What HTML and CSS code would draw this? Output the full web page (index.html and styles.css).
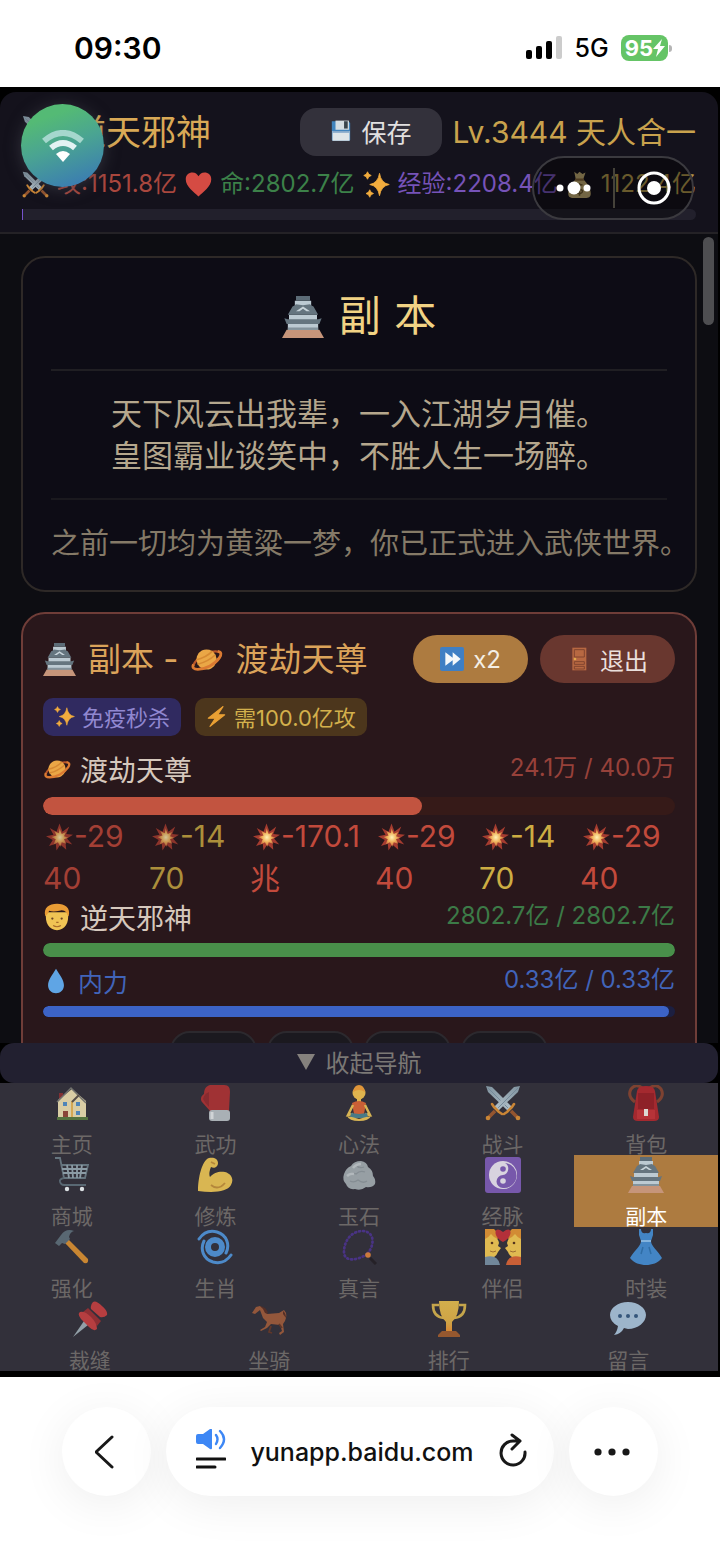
FILE: index.html
```html
<!DOCTYPE html>
<html lang="zh-CN">
<head>
<meta charset="utf-8">
<meta name="viewport" content="width=device-width, initial-scale=1">
<title>副本</title>
<link rel="stylesheet" href="styles.css">
</head>
<body>
<svg class="sprite" aria-hidden="true">
  <defs>
    <linearGradient id="steel" x1="0" y1="0" x2="1" y2="1"><stop offset="0" stop-color="#7f929e"/><stop offset="1" stop-color="#b3c2cb"/></linearGradient>
    <radialGradient id="flash"><stop offset="0" stop-color="#fff3b8"/><stop offset=".5" stop-color="#f0b35c"/><stop offset="1" stop-color="#c3643b"/></radialGradient>
    <linearGradient id="cup" x1="0" y1="0" x2="0" y2="1"><stop offset="0" stop-color="#d2ae4c"/><stop offset=".7" stop-color="#cfa446"/><stop offset="1" stop-color="#d98a35"/></linearGradient>
  </defs>
  <symbol id="sword" viewBox="0 0 36 36"><path d="M1 1l6 1 20 20-4 4L3 7z" fill="url(#steel)"/><path d="M3 3l20 20" stroke="#75899a" stroke-width="1"/><path d="M19 29l3-2 5-5 2-3" fill="none" stroke="#c98536" stroke-width="2.600" stroke-linecap="round" stroke-linejoin="round"/><path d="M26 26l6 6" stroke="#94552f" stroke-width="3.500"/><circle cx="33" cy="33" r="2.300" fill="#c98536"/></symbol>
  <symbol id="swords" viewBox="0 0 36 36"><use href="#sword" width="36" height="36"/><g transform="translate(36 0) scale(-1 1)"><use href="#sword" width="36" height="36"/></g></symbol>
  <symbol id="castle" viewBox="0 0 36 36"><path d="M4 29h28l4 7H0z" fill="#c6957a"/><path d="M5 24h26v5H5zM6 16h24v5H6zM11 4h14v5H11z" fill="#bccad2"/><path d="M5 27h26v2H5z" fill="#84939c"/><path d="M12 0h12v4H12z" fill="#5c6c77"/><path d="M9 9q2-1 3-2l6 1 6-1q1 1 3 2l4 7H5z" fill="#65757f"/><path d="M2 19l3 1h26l3-1-2 5H4z" fill="#65757f"/><path d="M12 13l6-4 6 4h-3l-3-2-3 2z" fill="#c8d4da"/></symbol>
  <symbol id="floppy" viewBox="0 0 36 36"><path d="M3 2h27l3 3v27q0 2-2 2H5q-2 0-2-2z" fill="#4184bd"/><path d="M9 1h22v15H9z" fill="#d5dde2"/><path d="M23 2h6v12h-6z" fill="#39434b"/><path d="M4 18h28v16H4z" fill="#dfe6e9"/><path d="M4 18h28v3H4z" fill="#87aacb"/></symbol>
  <symbol id="heart" viewBox="0 0 36 36"><path d="M18 34C12 28 1 21 1 11 1 5 5 2 10 2c4 0 6 2 8 5 2-3 4-5 8-5 5 0 9 3 9 9 0 10-11 17-17 23z" fill="#d54b43"/></symbol>
  <symbol id="spark" viewBox="0 0 36 36"><path d="M22 3q2 13 13 15-11 2-13 15Q20 20 9 18q11-2 13-15zM6 1q1 4 5 5-4 1-5 5-1-4-5-5 4-1 5-5zM9 25q1 4 5 5-4 1-5 5-1-4-5-5 4-1 5-5z" fill="#f2ac3e" stroke="#f2ac3e"/></symbol>
  <symbol id="bag" viewBox="0 0 36 36"><path d="M11 1l4 3 3-3 4 3 4-2-3 9c5 5 10 12 10 19 0 5-3 6-7 6H10c-5 0-7-2-7-6 0-7 5-14 10-19z" fill="#c0aa72"/><path d="M12 10h12v3H12z" fill="#80633a"/><path d="M22 19c-3-2-8-1-8 2 0 4 8 2 8 6 0 3-5 4-8 2M18 16v17" fill="none" stroke="#6b5830" stroke-width="2"/></symbol>
  <symbol id="planet" viewBox="0 0 36 36"><g transform="rotate(-28 18 18)"><path d="M2 17q6-5 16-5t16 5" fill="none" stroke="#b9562a" stroke-width="2.500"/><circle cx="18" cy="18" r="11" fill="#eaa746"/><path d="M8 13q10 3 20 0M7 18q11 3 22 0" fill="none" stroke="#d68a33" stroke-width="1.800"/><path d="M3 16c-7 5 6 10 15 10s22-5 15-10" fill="none" stroke="#db7a32" stroke-width="3"/></g></symbol>
  <symbol id="fast" viewBox="0 0 36 36"><rect width="36" height="36" rx="3" fill="#3f7fc4"/><path d="M8 8l11 8V8l12 10-12 10v-8L8 28z" fill="#f5f8fa"/></symbol>
  <symbol id="door" viewBox="0 0 36 36"><path d="M8 1h21v34H8z" fill="#b76842"/><path d="M11 4h15v11H11zM11 22h15v4H11zM11 29h15v4H11z" fill="none" stroke="#82452f" stroke-width="1.500"/><circle cx="12" cy="18" r="2" fill="#e0a84c"/></symbol>
  <symbol id="bolt" viewBox="0 0 36 36"><path d="M29 1L4 21h12L7 35l25-20H20z" fill="#e9a034" stroke="#e9a034" stroke-width="2" stroke-linejoin="round"/></symbol>
  <symbol id="boom" viewBox="0 0 36 36"><path d="M18 0l4 11 9-7-4 10 9 1-8 5 7 8-9-3 1 10-8-7-5 8-1-9-9 3 5-8-9-5 10-2-5-9 9 5z" fill="#a53c30"/><path d="M18 6l3 8 6-3-3 6 6 2-6 2 3 6-6-2-2 6-3-6-6 3 3-7-6-3 7-2-3-6 6 3z" fill="url(#flash)"/></symbol>
  <symbol id="face" viewBox="0 0 36 36"><path d="M4 12C2 26 8 35 18 35s16-9 14-23z" fill="#f0c454"/><path d="M3 17C0 6 8 1 18 1s18 5 15 16q-2-1-3-5-4-4-9-2-8 2-13 0-2 5-5 7z" fill="#e99c35"/><g fill="#6a4425"><circle cx="12" cy="20" r="1.500"/><circle cx="24" cy="20" r="1.500"/></g><path d="M17 25h3M13 29q5 3 10 0" fill="none" stroke="#a66a2a" stroke-width="1.500"/></symbol>
  <symbol id="drop" viewBox="0 0 36 36"><path d="M18 1c5 9 11 15 11 23 0 7-5 11-11 11S7 31 7 24C7 16 13 10 18 1z" fill="#5fa5e5"/></symbol>
  <symbol id="house" viewBox="0 0 36 36"><path d="M5 8h4v9H5z" fill="#813033"/><path d="M4 15L18 4l14 12v18H4z" fill="#d9cda4"/><path d="M3 17L17 3l15 15" fill="none" stroke="#71716d" stroke-width="1.500"/><path d="M18 16v18" stroke="#d4a853" stroke-width="2"/><path d="M18 17l7-7" stroke="#574e49" stroke-width="2"/><path d="M9 17h4v4H9zM22 17h4v4h-4zM22 26h4v4h-4z" fill="#4f85b8"/><path d="M9 26h5v8H9z" fill="#894538"/><path d="M3 32h31v3H3z" fill="#54733f"/></symbol>
  <symbol id="glove" viewBox="0 0 36 36"><path d="M13 0h14c5 0 6 3 6 7l-1 19H13L5 17c-2-3-1-6 2-8 0-5 2-8 6-9z" fill="#a03234"/><path d="M12 7q-5 2-6 7 2 4 6 8z" fill="#882b30"/><rect x="12" y="25" width="21" height="11" rx="3" fill="#a9b0b5"/><path d="M15 27v7" stroke="#d0d4d6" stroke-width="3"/></symbol>
  <symbol id="lotus" viewBox="0 0 36 36"><circle cx="18" cy="8" r="6.500" fill="#dfb44e"/><path d="M12 7q1-7 6-7t6 7q-6-4-12 0z" fill="#df9539"/><path d="M16 14h4v4h-4z" fill="#dfb44e"/><path d="M11 18q7-4 14 0l-2 11H13z" fill="#c95f36"/><path d="M12 20L7 30l5-1M24 20l5 10-5-1" fill="none" stroke="#d7b454" stroke-width="2.500"/><path d="M10 28l8 1 8-1 1 5H9z" fill="#477a86"/><path d="M6 31q6 1 12 3 6-2 12-3-2 5-12 5-10 0-12-5z" fill="#d7b454"/></symbol>
  <symbol id="pack" viewBox="0 0 36 36"><path d="M7 17Q-1 11 3 4 8-2 14 3M29 17q8-6 4-13-5-6-11-1" fill="none" stroke="#7e4231" stroke-width="3"/><path d="M9 6q1-5 9-5t9 5l4 26q0 4-5 4H10q-5 0-5-4z" fill="#a4292f"/><path d="M10 8h16v16H10z" fill="#8e2128"/><path d="M9 25h18v9H9z" fill="#b63338"/><path d="M16 24h4v7h-4z" fill="#dddad3"/></symbol>
  <symbol id="cart" viewBox="0 0 36 36"><path d="M1 1h5l4 20h21l3-13H8" fill="none" stroke="#66757f" stroke-width="1.800"/><path d="M8 12h25M9 16h23M13 8l2 13M18 8l1 13M23 8v13M28 8l-2 13" stroke="#8b9ba5" stroke-width="1.800"/><path d="M10 21q-5 1-4 4 1 3 4 3h22" fill="none" stroke="#596873" stroke-width="1.800"/><circle cx="13" cy="32" r="2.200" fill="#dce1e4"/><circle cx="28" cy="32" r="2.200" fill="#dce1e4"/></symbol>
  <symbol id="arm" viewBox="0 0 36 36"><path d="M1 34C1 21 5 3 12 1c4-1 9 0 9 5 0 4-4 6-7 4-2 5-2 8-1 10 4-5 10-6 15-5 7 2 9 8 6 13-4 7-17 8-33 6z" fill="#d9b652"/><path d="M14 28q7 6 14-2M14 5l4 2" fill="none" stroke="#b4873b" stroke-width="1.800"/></symbol>
  <symbol id="rock" viewBox="0 0 36 36"><path d="M3 17q2-6 7-8 3-5 10-5 6 1 7 6 5 3 5 9 3 3 2 8-3 4-9 3-5 4-11 2-7 1-9-5-4-4-2-10z" fill="#979fa4"/><path d="M7 18q4-3 8-1 4-4 9-2M15 8q3 4 8 2M9 24q4 2 8-1 5 4 9 1" fill="none" stroke="#858d93" stroke-width="1.300"/><path d="M12 11q3-4 8-4M6 19q3-3 7-2" fill="none" stroke="#b2b8bc" stroke-width="2.500"/></symbol>
  <symbol id="yin" viewBox="0 0 36 36"><rect width="36" height="36" rx="3" fill="#7758ab"/><circle cx="18" cy="18" r="14" fill="#d8d3df"/><path d="M20 6a12.500 12.500 0 0 1-2 25 6.500 6.500 0 0 1 0-13A6.500 6.500 0 0 0 20 6z" fill="#7758ab"/><circle cx="18" cy="12" r="2.800" fill="#7758ab"/><circle cx="18" cy="24" r="2.800" fill="#d8d3df"/></symbol>
  <symbol id="hammer" viewBox="0 0 36 36"><path d="M14 10l20 20q1 5-4 4L11 14z" fill="#c98632"/><path d="M1 14l6-8Q12-1 20 2q-4 1-5 6l1 2-5 5-3-1-3 3z" fill="#596873"/></symbol>
  <symbol id="cyclone" viewBox="0 0 36 36"><g fill="none" stroke="#4d8ac9" stroke-linecap="round"><circle cx="18" cy="18" r="7" stroke-width="6"/><path d="M2 10Q9 0 20 3c10 3 13 13 9 21M34 26q-7 10-18 7C6 30 3 20 7 12" stroke-width="3"/></g></symbol>
  <symbol id="beads" viewBox="0 0 36 36"><path d="M26 25C18 31 3 34 3 23 3 12 10 2 22 2c13 1 11 16 4 23z" fill="none" stroke="#493384" stroke-width="2.700" stroke-linecap="round" stroke-dasharray="1 3"/><circle cx="27" cy="26" r="2.800" fill="#cb7a3b"/><path d="M29 29l6 6" stroke="#252127" stroke-width="3"/></symbol>
  <symbol id="couple" viewBox="0 0 36 36"><path d="M0 5h8q5 4 6 9l-1 3 3 2-3 4q-3 8-13 6z" fill="#e0ba51"/><path d="M36 5h-8q-5 4-6 9l1 3-3 2 3 4q3 8 13 6z" fill="#e0ba51"/><path d="M0 0h9q4 3 4 10-5-2-7-5-3 4-6 5zM36 0h-9q-4 3-4 10 5-2 7-5 3 4 6 5z" fill="#d28b34"/><path d="M18 13C8 8 9-2 15 1l3 2 3-2c6-3 7 7-3 12z" fill="#b3303a"/><path d="M0 28q13-3 15 8H0z" fill="#71879a"/><path d="M36 28q-13-3-15 8h15z" fill="#c95f36"/><g fill="#54351e"><circle cx="7" cy="14" r="1.300"/><circle cx="29" cy="14" r="1.300"/></g><path d="M5 22q3 2 6 0M31 22q-3 2-6 0" fill="none" stroke="#9c6c34"/></symbol>
  <symbol id="dress" viewBox="0 0 36 36"><path d="M11 0h2q0 5 5 4 5 1 5-4h2v6l-2 6c0 5 7 10 11 17-4 5-10 7-16 7S6 34 2 29c4-7 11-12 11-17l-2-6z" fill="#4385c5"/><path d="M13 12h10" stroke="#83b3dd" stroke-width="2"/><path d="M15 18l-2 7M21 18l2 7" stroke="#2f6da6" stroke-width="1.500"/></symbol>
  <symbol id="pin" viewBox="0 0 36 36"><path d="M12 20l4 4L1 36z" fill="#929fa7"/><path d="M16 7l13 13-4 5L11 11z" fill="#8f2f34"/><path d="M21 1q3-2 9 4 6 5 5 9-3 3-7 2L19 8q-1-4 2-7zM8 11q5-1 11 5t6 12q-3 3-8-2l-8-8q-4-5-1-7z" fill="#b63e40"/></symbol>
  <symbol id="horse" viewBox="0 0 36 36"><path d="M1 12l4-6 4-1 4 3 3 5 12-1 5-3q4 4 1 11l-2 3 1 8-4 3-1-2 3-2-2-6-9-1-4 4-6 3-1-1 5-3 2-5-4-4-3-8-5 4z" fill="#93573b"/><path d="M9 5q7 1 8 8l-3-1q-1-4-5-7zM32 10q3 2 3 7l-3-4z" fill="#552f27"/><path d="M20 25l-2 6 3 1M28 23l3 4" fill="none" stroke="#613729" stroke-width="1.800"/></symbol>
  <symbol id="trophy" viewBox="0 0 36 36"><path d="M8 4H2q0 12 11 13h1M28 4h6q0 12-11 13h-1" fill="none" stroke="#c5a54b" stroke-width="2.600"/><path d="M8 0h20q0 15-7 21v9h-6v-9Q8 15 8 0z" fill="url(#cup)"/><path d="M11 30h14l4 4v2H7v-2z" fill="#96582f"/></symbol>
  <symbol id="chat" viewBox="0 0 36 36"><path d="M18 1c10 0 18 6 18 13s-8 14-18 14l-4-1q-3 6-10 7 3-3 4-9-8-4-8-11C0 7 8 1 18 1z" fill="#9db5cb"/><g fill="#35567b"><circle cx="10" cy="15" r="2"/><circle cx="18" cy="15" r="2"/><circle cx="26" cy="15" r="2"/></g></symbol>
</svg>

<header class="status">
  <time>09:30</time>
  <div class="status-right">
    <svg class="signal" viewBox="0 0 36 23" aria-label="信号"><rect x="0" y="14" width="6" height="9" rx="2"/><rect x="10" y="10" width="6" height="13" rx="2"/><rect x="20" y="5" width="6" height="18" rx="2"/><rect x="30" y="0" width="6" height="23" rx="2" fill="#ccc"/></svg>
    <span class="net">5G</span>
    <span class="battery"><b>95</b><svg viewBox="0 0 12 18" aria-hidden="true"><path d="M9 0L0 10h5l-2 8 9-11H7z" fill="#fff"/></svg></span>
  </div>
</header>

<div class="app">
  <section class="hero">
    <div class="hero-top">
      <h1 class="name"><svg><use href="#swords"/></svg>逆天邪神</h1>
      <button class="save"><svg><use href="#floppy"/></svg>保存</button>
      <span class="level">Lv.3444 天人合一</span>
    </div>
    <div class="stats">
      <span class="stat atk"><svg><use href="#swords"/></svg>攻:1151.8亿</span>
      <span class="stat hp"><svg><use href="#heart"/></svg>命:2802.7亿</span>
      <span class="stat exp"><svg><use href="#spark"/></svg>经验:2208.4亿</span>
      <span class="stat gold"><svg><use href="#bag"/></svg>1122.4亿</span>
    </div>
    <div class="exp-track"><div class="exp-fill"></div></div>
    <button class="float-wifi" aria-label="网络"><svg viewBox="0 0 42 32"><path d="M2 11Q21-5 40 11" fill="none" stroke="#a5d7cd" stroke-width="6"/><path d="M9 18q12-10 24 0" fill="none" stroke="#e2f2f3" stroke-width="6"/><path d="M14 24q7-6 14 0l-7 8z" fill="#fff"/></svg></button>
    <div class="capsule">
      <button aria-label="更多"><svg viewBox="0 0 36 14" fill="#fff"><circle cx="4" cy="7" r="3.500"/><circle cx="18" cy="7" r="6.500"/><circle cx="31" cy="7" r="3.500"/></svg></button>
      <button class="close" aria-label="关闭"><svg viewBox="0 0 34 34"><circle cx="17" cy="17" r="15" fill="none" stroke="#fff" stroke-width="3"/><circle cx="17" cy="17" r="7" fill="#fff"/></svg></button>
    </div>
  </section>

  <div class="viewport">
  <main class="scroll">
    <section class="card intro">
      <h2><svg><use href="#castle"/></svg>副 本</h2>
      <p class="poem">天下风云出我辈，一入江湖岁月催。<br>皇图霸业谈笑中，不胜人生一场醉。</p>
      <p class="note">之前一切均为黄粱一梦，你已正式进入武侠世界。</p>
    </section>

    <section class="card battle">
      <div class="battle-head">
        <h3><svg><use href="#castle"/></svg>副本 - <svg><use href="#planet"/></svg>渡劫天尊</h3>
        <button class="pill speed"><svg><use href="#fast"/></svg>x2</button>
        <button class="pill quit"><svg><use href="#door"/></svg>退出</button>
      </div>
      <div class="tags">
        <span class="tag immune"><svg><use href="#spark"/></svg>免疫秒杀</span>
        <span class="tag need"><svg><use href="#bolt"/></svg>需100.0亿攻</span>
      </div>
      <div class="unit"><span class="who"><svg><use href="#planet"/></svg>渡劫天尊</span><span class="val red">24.1万 / 40.0万</span></div>
      <div class="bar boss"><div class="fill" style="width:60%"></div></div>
      <div class="hits">
        <span class="hit faded"><svg><use href="#boom"/></svg>-29<br>40</span>
        <span class="hit yellow faded"><svg><use href="#boom"/></svg>-14<br>70</span>
        <span class="hit"><svg><use href="#boom"/></svg>-170.1<br>兆</span>
        <span class="hit"><svg><use href="#boom"/></svg>-29<br>40</span>
        <span class="hit yellow"><svg><use href="#boom"/></svg>-14<br>70</span>
        <span class="hit"><svg><use href="#boom"/></svg>-29<br>40</span>
      </div>
      <div class="unit"><span class="who"><svg><use href="#face"/></svg>逆天邪神</span><span class="val green">2802.7亿 / 2802.7亿</span></div>
      <div class="bar life"><div class="fill" style="width:100%"></div></div>
      <div class="unit mana-row"><span class="who blue"><svg><use href="#drop"/></svg>内力</span><span class="val blue">0.33亿 / 0.33亿</span></div>
      <div class="bar mana"><div class="fill" style="width:99%"></div></div>
      <div class="skills"><button aria-label="技能一"></button><button aria-label="技能二"></button><button aria-label="技能三"></button><button aria-label="技能四"></button></div>
    </section>
  </main>
  <div class="thumb"></div>
  </div>

  <button class="fold"><svg viewBox="0 0 18 16"><path d="M0 0h18L9 16z" fill="#85817d"/></svg>收起导航</button>
  <nav class="nav">
    <button><svg><use href="#house"/></svg>主页</button>
    <button><svg><use href="#glove"/></svg>武功</button>
    <button><svg><use href="#lotus"/></svg>心法</button>
    <button><svg><use href="#swords"/></svg>战斗</button>
    <button><svg><use href="#pack"/></svg>背包</button>
    <button><svg><use href="#cart"/></svg>商城</button>
    <button><svg><use href="#arm"/></svg>修炼</button>
    <button><svg><use href="#rock"/></svg>玉石</button>
    <button><svg><use href="#yin"/></svg>经脉</button>
    <button class="active" aria-current="page"><svg><use href="#castle"/></svg>副本</button>
    <button><svg><use href="#hammer"/></svg>强化</button>
    <button><svg><use href="#cyclone"/></svg>生肖</button>
    <button><svg><use href="#beads"/></svg>真言</button>
    <button><svg><use href="#couple"/></svg>伴侣</button>
    <button><svg><use href="#dress"/></svg>时装</button>
    <button><svg><use href="#pin"/></svg>裁缝</button>
    <button><svg><use href="#horse"/></svg>坐骑</button>
    <button><svg><use href="#trophy"/></svg>排行</button>
    <button><svg><use href="#chat"/></svg>留言</button>
  </nav>
</div>

<footer class="browser">
  <button class="round" aria-label="返回"><svg width="20" height="34" viewBox="0 0 20 34"><path d="M17 2L1 17l16 15" fill="none" stroke="#181818" stroke-width="3" stroke-linecap="round" stroke-linejoin="round"/></svg></button>
  <div class="address">
    <button aria-label="页面设置"><svg width="30" height="42" viewBox="0 0 30 42"><path d="M2 5h5l7-5q2-1 2 1v18q0 2-2 1l-7-5H2q-2 0-2-2V7q0-2 2-2z" fill="#3d87f5"/><path d="M20 6q3 4 0 9M24 2q8 8 0 17" fill="none" stroke="#3d87f5" stroke-width="2.400" stroke-linecap="round"/><path d="M1 30h28M1 38h18" stroke="#111" stroke-width="3" stroke-linecap="round"/></svg></button>
    <span class="url">yunapp.baidu.com</span>
    <button aria-label="刷新"><svg width="30" height="34" viewBox="0 0 30 34"><path d="M21 8h-6A12 12 0 1 0 27 19M14 2l8 6-8 8" fill="none" stroke="#181818" stroke-width="3" stroke-linecap="round" stroke-linejoin="round"/></svg></button>
  </div>
  <button class="round" aria-label="更多"><svg width="36" height="8" viewBox="0 0 36 8" fill="#181818"><circle cx="4" cy="4" r="3.600"/><circle cx="18" cy="4" r="3.600"/><circle cx="32" cy="4" r="3.600"/></svg></button>
</footer>
</body>
</html>
```

FILE: styles.css
```css
* { box-sizing: border-box; }
body {
  margin: 0;
  height: 100vh;
  display: flex;
  flex-direction: column;
  background: #fff;
  font-family: Inter, "Noto Sans CJK SC", sans-serif;
}
h1, h2, h3, p { margin: 0; font-weight: 400; }
button { border: 0; padding: 0; background: none; color: inherit; font: inherit; }
svg { flex: none; display: block; }
.sprite { position: absolute; width: 0; height: 0; }

/* phone status bar */
.status {
  flex: none;
  height: 87px;
  padding: 8px 52px 0 74px;
  display: flex;
  align-items: center;
  justify-content: space-between;
  color: #000;
}
.status time { font-size: 30px; font-weight: 600; }
.status-right { display: flex; align-items: center; gap: 12px; }
.signal { width: 36px; height: 23px; }
.net { font-size: 25px; font-weight: 500; line-height: 26px; }
.battery {
  position: relative;
  display: flex;
  align-items: center;
  height: 26px;
  padding: 0 3px 0 4px;
  border-radius: 8px;
  background: #65c466;
  color: #fff;
  font-size: 22px;
}
.battery svg { width: 12px; height: 18px; }
.battery::after {
  content: "";
  position: absolute;
  left: 100%;
  top: 10px;
  width: 3px;
  height: 7px;
  margin-left: 1px;
  border-radius: 0 3px 3px 0;
  background: #b5b5b5;
}

.app {
  flex: 1;
  min-height: 0;
  display: flex;
  flex-direction: column;
  padding: 5px 2px 6px 0;
  background: #000;
}

/* player summary */
.hero {
  position: relative;
  flex: none;
  padding: 16px 22px 12px;
  background: #14121c;
  border-bottom: 2px solid #242226;
  border-radius: 16px 16px 0 0;
}
.hero-top { display: flex; align-items: center; gap: 11px; white-space: nowrap; }
.name { display: flex; align-items: center; gap: 14px; margin-right: auto; font-size: 35px; line-height: 48px; color: #d9a956; }
.name svg { width: 35px; height: 35px; }
.save {
  display: flex;
  align-items: center;
  gap: 10px;
  height: 48px;
  padding: 0 30px 2px;
  border-radius: 16px;
  background: #33313b;
  color: #e2e0e0;
  font-size: 25px;
}
.save svg { width: 22px; height: 26px; }
.level { padding-bottom: 4px; font-size: 30px; color: #c9a24d; }
.stats { display: flex; justify-content: space-between; margin-top: 12px; white-space: nowrap; font-size: 24px; line-height: 32px; }
.stat { display: flex; align-items: center; gap: 8px; }
.stat svg { width: 27px; height: 27px; }
.atk { color: #a9473e; }
.hp { color: #3c8149; }
.exp { color: #7653b8; }
.gold { color: #b0964a; }
.exp-track { height: 11px; margin-top: 9px; border-radius: 0 6px 6px 0; background: #22202c; }
.exp-fill { width: 1px; height: 11px; background: #7653cc; }
.float-wifi {
  position: absolute;
  left: 21px;
  top: 12px;
  display: flex;
  align-items: center;
  justify-content: center;
  width: 83px;
  height: 83px;
  border-radius: 50%;
  background: linear-gradient(160deg, #54ba75 20%, #4aa492 50%, #3978b5 95%);
  box-shadow: 0 2px 16px rgba(70, 72, 82, .6);
}
.float-wifi svg { width: 42px; height: 32px; }
.capsule {
  position: absolute;
  right: 24px;
  top: 64px;
  display: grid;
  grid-template-columns: 1fr 1fr;
  align-items: center;
  width: 162px;
  height: 64px;
  border: 2px solid #3b3a3f;
  border-radius: 32px;
  background: rgba(0, 0, 0, .4);
}
.capsule button { display: flex; align-items: center; justify-content: center; height: 40px; }
.capsule .close { border-left: 2px solid #45423a; }
.capsule button svg { width: 36px; height: 14px; }
.capsule .close svg { width: 34px; height: 34px; }

/* scrolling content */
.viewport { position: relative; flex: 1; min-height: 0; background: #0d0d12; }
.scroll {
  height: 100%;
  overflow-y: auto;
  scrollbar-width: none;
  padding: 22px 21px 20px;
}
.thumb { position: absolute; right: 4px; top: 3px; width: 11px; height: 88px; border-radius: 6px; background: #4e4e51; }
.card { border-radius: 24px; border: 2px solid #2e2927; background: #0d0c15; }
.intro { padding: 27px 28px 24px; text-align: center; }
.intro h2 {
  display: flex;
  align-items: center;
  justify-content: center;
  gap: 15px;
  padding-bottom: 20px;
  border-bottom: 2px solid #201f23;
  font-family: "DejaVu Sans", "Noto Sans CJK SC", sans-serif;
  font-size: 42px;
  line-height: 64px;
  color: #f1d384;
}
.intro h2 svg { width: 42px; height: 42px; }
.poem { padding: 22px 0 21px; border-bottom: 2px solid #1a191e; font-size: 31px; line-height: 42px; color: #b5a78d; white-space: nowrap; }
.note { padding-top: 22px; font-size: 29px; line-height: 44px; color: #857a67; white-space: nowrap; }

.battle { margin-top: 20px; padding: 21px 20px; background: #29171b; border-color: #6f3d38; }
.battle-head { display: flex; align-items: center; gap: 12px; white-space: nowrap; }
.battle-head h3 { display: flex; align-items: center; gap: 12px; margin-right: auto; font-size: 33px; line-height: 48px; color: #dba35a; }
.battle-head h3 svg { width: 33px; height: 33px; }
.pill { display: flex; align-items: center; height: 48px; padding: 0 27px; border-radius: 24px; gap: 9px; font-size: 24px; }
.pill svg { width: 24px; height: 24px; }
.speed { background: #ad7b40; color: #f3eee5; }
.quit { background: #69372f; color: #eadfdc; }
.tags { display: flex; gap: 14px; margin-top: 15px; }
.tag { display: flex; align-items: center; gap: 7px; height: 38px; padding: 0 11px 2px; border-radius: 10px; font-size: 22px; }
.tag svg { width: 21px; height: 21px; }
.immune { background: #302a60; color: #9087d0; }
.need { background: #4c361c; color: #d3b04c; }
.unit { display: flex; justify-content: space-between; align-items: center; height: 44px; }
.tags + .unit { margin-top: 11px; }
.who { display: flex; align-items: center; gap: 9px; font-size: 28px; color: #d6c8bd; }
.who svg { width: 28px; height: 28px; }
.val { padding-bottom: 8px; font-size: 24px; }
.red { color: #97413a; }
.green { color: #3c7a47; }
.blue { color: #4164b9; }
.bar { overflow: hidden; border-radius: 9px; }
.fill { height: 100%; border-radius: 9px; }
.boss { height: 18px; margin-top: 6px; background: #361a18; }
.boss .fill { background: #c25440; }
.life { height: 14px; margin-top: 8px; background: #203b25; }
.life .fill { background: #498f4a; }
.mana { height: 11px; margin-top: 3px; background: #1c1f40; }
.mana .fill { background: #3c63c6; }
.mana-row .who { font-size: 25px; }
.mana-row .who svg { width: 26px; height: 26px; }
.mana-row { margin-top: 2px; }
.hits {
  display: grid;
  grid-template-columns: 106fr 101fr 125fr 104fr 101fr 95fr;
  font-size: 30px;
  line-height: 42px;
  white-space: nowrap;
  color: #c24a3c;
}
.hit svg { display: inline-block; vertical-align: middle; width: 27px; height: 28px; margin: 0 1px 4px 3px; }
.yellow { color: #cdad43; }
.faded { opacity: .8; }
.hits + .unit { height: 36px; }
.skills { display: flex; justify-content: center; gap: 10px; margin-top: 14px; }
.skills button { width: 87px; height: 52px; border: 2px solid #2c292e; border-radius: 20px; background: #1b191f; }

/* bottom navigation */
.fold {
  flex: none;
  display: flex;
  align-items: center;
  justify-content: center;
  gap: 11px;
  height: 40px;
  padding-bottom: 3px;
  border-radius: 14px;
  background: #222030;
  color: #7b7875;
  font-size: 24px;
}
.fold svg { width: 18px; height: 16px; }
.nav { flex: none; display: flex; flex-wrap: wrap; background: #32303a; color: #6c6867; font-size: 21px; line-height: 20px; }
.nav button {
  flex: 1 0 20%;
  display: flex;
  flex-direction: column;
  align-items: center;
  justify-content: space-between;
  height: 72px;
  padding-top: 2px;
}
.nav svg { width: 36px; height: 36px; }
.nav .active { background: #ad7b40; color: #fff; }

/* browser toolbar */
.browser {
  flex: none;
  display: flex;
  align-items: center;
  gap: 15px;
  height: 181px;
  padding: 0 62px 32px;
  background: #fff;
  overflow: hidden;
}
.round, .address { height: 89px; border-radius: 45px; background: #fff; box-shadow: 0 8px 48px rgba(0, 0, 0, .07); }
.round { display: flex; align-items: center; justify-content: center; flex: none; width: 89px; padding-right: 4px; }
.address { flex: 1; display: flex; align-items: center; justify-content: space-between; padding: 0 26px 4px 30px; }
.url { padding-top: 4px; font-size: 25px; font-weight: 500; color: #111; }
```
